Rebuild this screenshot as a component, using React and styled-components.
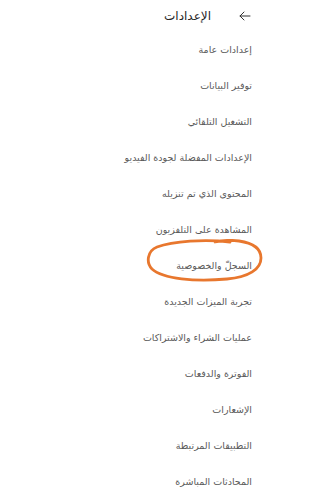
import React from "react";
import styled, { createGlobalStyle } from "styled-components";

const Global = createGlobalStyle`
  body {
    margin: 0;
    background: #fff;
    font-family: "DejaVu Sans", sans-serif;
  }
`;

const Page = styled.div`
  width: 264px;
  height: 500px;
  overflow: hidden;
  background: #fff;
  direction: rtl;
  position: relative;
`;

const Header = styled.div`
  height: 31px;
  display: flex;
  align-items: center;
  padding-right: 13px;
  gap: 28px;
`;

const Title = styled.div`
  font-size: 12px;
  color: #262626;
`;

const List = styled.div`
  display: flex;
  flex-direction: column;
`;

const Row = styled.div`
  height: 36px;
  display: flex;
  align-items: center;
  padding-right: 12px;
  font-size: 9.5px;
  color: #5a5a5a;
  position: relative;
`;

const Circle = styled.svg`
  position: absolute;
  left: 145px;
  top: -8px;
  pointer-events: none;
`;

const items = [
  "إعدادات عامة",
  "توفير البيانات",
  "التشغيل التلقائي",
  "الإعدادات المفضلة لجودة الفيديو",
  "المحتوى الذي تم تنزيله",
  "المشاهدة على التلفزيون",
  "السجلّ والخصوصية",
  "تجربة الميزات الجديدة",
  "عمليات الشراء والاشتراكات",
  "الفوترة والدفعات",
  "الإشعارات",
  "التطبيقات المرتبطة",
  "المحادثات المباشرة",
];

const BackArrow = () => (
  <svg width="12" height="10" viewBox="0 0 12 10" fill="none" stroke="#333" strokeWidth="1" strokeLinecap="round">
    <path d="M11 5H1M5 1L1 5l4 4" />
  </svg>
);

export default function App() {
  return (
    <Page>
      <Global />
      <Header>
        <BackArrow />
        <Title>الإعدادات</Title>
      </Header>
      <List>
        {items.map((t, i) => (
          <Row key={i}>
            {t}
            {i === 6 && (
              <Circle width="119" height="46" viewBox="0 0 119 46">
                <path
                  d="M85 3 C60 0 28 2 12 8 C2 12 1 24 7 30 C18 40 50 43 82 40 C104 38 116 30 116 19 C116 9 108 4 94 2 C87 1 79 1 70 3"
                  fill="none"
                  stroke="#e8772e"
                  strokeWidth="2.8"
                  strokeLinecap="round"
                />
              </Circle>
            )}
          </Row>
        ))}
      </List>
    </Page>
  );
}
